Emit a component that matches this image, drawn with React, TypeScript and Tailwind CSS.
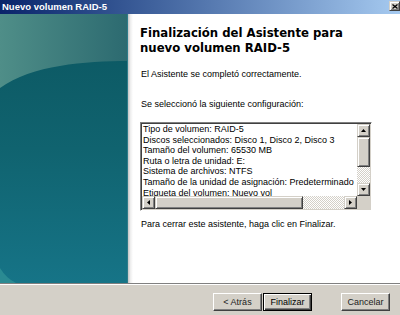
import React from "react";

const raised =
  "bg-[#d4d0c8] border border-t-[#d4d0c8] border-l-[#d4d0c8] border-r-[#404040] border-b-[#404040] shadow-[inset_1px_1px_#fff,inset_-1px_-1px_#808080]";
const checker =
  "bg-[repeating-conic-gradient(#d4d0c8_0_25%,#ffffff_0_50%)] bg-[length:2px_2px]";

function Arrow({ dir }: { dir: "up" | "down" | "left" | "right" }) {
  const pts: Record<string, string> = {
    up: "2.5,0 5,3 0,3",
    down: "0,0 5,0 2.5,3",
    left: "0,2.5 3,0 3,5",
    right: "0,0 3,2.5 0,5",
  };
  const v = dir === "up" || dir === "down";
  return (
    <svg width={v ? 5 : 3} height={v ? 3 : 5} viewBox={v ? "0 0 5 3" : "0 0 3 5"}>
      <polygon points={pts[dir]} fill="#000" />
    </svg>
  );
}

function ScrollBtn({ dir }: { dir: "up" | "down" | "left" | "right" }) {
  return (
    <div className={`w-[13px] h-[13px] shrink-0 flex items-center justify-center ${raised}`}>
      <Arrow dir={dir} />
    </div>
  );
}

function Watermark() {
  return (
    <svg width="128" height="269" viewBox="0 0 128 269" className="block shrink-0">
      <defs>
        <linearGradient id="wm" x1="0" y1="0" x2="0" y2="1">
          <stop offset="0" stopColor="#0b5660" />
          <stop offset="0.5" stopColor="#10636f" />
          <stop offset="1" stopColor="#167487" />
        </linearGradient>
        <linearGradient id="wt" x1="0" y1="0" x2="1" y2="0">
          <stop offset="0" stopColor="#4f8e88" />
          <stop offset="1" stopColor="#2c6a70" />
        </linearGradient>
      </defs>
      <rect width="128" height="269" fill="url(#wm)" />
      <path d="M0 0H128V47C85 47 32 51 0 74Z" fill="url(#wt)" />
      <path d="M0 254Q6 264 16 269H0Z" fill="#2a8a92" />
      <rect x="127" y="0" width="1" height="269" fill="#2d7c8a" />
    </svg>
  );
}

const lines = [
  "Tipo de volumen: RAID-5",
  "Discos seleccionados: Disco 1, Disco 2, Disco 3",
  "Tamaño del volumen: 65530 MB",
  "Ruta o letra de unidad: E:",
  "Sistema de archivos: NTFS",
  "Tamaño de la unidad de asignación: Predeterminado",
  "Etiqueta del volumen: Nuevo vol",
];

export default function App() {
  return (
    <div className="w-[400px] h-[315px] flex flex-col overflow-hidden bg-[#d4d0c8] font-['Liberation_Sans',Arial,sans-serif] text-black">
      {/* Title bar */}
      <div className="h-[14px] shrink-0 flex items-center justify-between bg-gradient-to-r from-[#0a246a] to-[#a6caf0]">
        <span className="pl-[2px] text-white font-bold text-[9.5px] leading-none">
          Nuevo volumen RAID-5
        </span>
        <div className={`w-[11px] h-[10px] flex items-center justify-center self-start mt-[1px] ${raised}`}>
          <svg width="6" height="5" viewBox="0 0 6 5">
            <path d="M0.5 0.5L5.5 4.5M5.5 0.5L0.5 4.5" stroke="#000" strokeWidth="1.3" />
          </svg>
        </div>
      </div>

      {/* Body */}
      <div className="h-[269px] shrink-0 flex">
        <Watermark />
        <div className="w-[5px] h-full shrink-0 bg-gradient-to-r from-[#c4c4c4] via-[#eeeeee] to-white" />
        <div className="flex-1 bg-white pl-[7px] pt-[12px] flex flex-col">
          <h1 className="font-['DejaVu_Sans',Verdana,sans-serif] font-bold text-[11.7px] leading-[15px]">
            Finalización del Asistente para
            <br />
            nuevo volumen RAID-5
          </h1>
          <p className="mt-[12.5px] pl-px text-[9px] leading-[11px]">
            El Asistente se completó correctamente.
          </p>
          <p className="mt-[19px] pl-px text-[9px] leading-[11px]">
            Se seleccionó la siguiente configuración:
          </p>

          {/* List box */}
          <div className="mt-[12.5px] w-[232px] h-[89px] border border-[#808080] border-r-white border-b-white shadow-[inset_1px_1px_#404040,inset_-1px_-1px_#d4d0c8] p-px flex flex-col">
            <div className="h-[72px] flex">
              <div className="flex-1 overflow-hidden bg-white pl-px text-[9px] leading-[10.6px] whitespace-nowrap">
                {lines.map((l) => (
                  <div key={l}>{l}</div>
                ))}
              </div>
              <div className="w-[13px] flex flex-col">
                <ScrollBtn dir="up" />
                <div className={`h-[30px] ${raised}`} />
                <div className={`flex-1 ${checker}`} />
                <ScrollBtn dir="down" />
              </div>
            </div>
            <div className="h-[13px] flex">
              <ScrollBtn dir="left" />
              <div className={`w-[148px] ${raised}`} />
              <div className={`flex-1 ${checker}`} />
              <ScrollBtn dir="right" />
              <div className="w-[13px] bg-[#d4d0c8]" />
            </div>
          </div>

          <p className="mt-[8px] pl-px text-[9px] leading-[11px]">
            Para cerrar este asistente, haga clic en Finalizar.
          </p>
        </div>
      </div>

      {/* Separator */}
      <div className="h-px shrink-0 bg-[#808080]" />
      <div className="h-px shrink-0 bg-white" />

      {/* Buttons */}
      <div className="flex-1 flex justify-end items-start pt-[8px] pr-[10px]">
        <button className="w-[49px] h-[18px] text-[9px] leading-none text-[#222] bg-[#d4d0c8] border border-t-white border-l-white border-r-[#404040] border-b-[#404040] shadow-[inset_-1px_-1px_#808080]">
          &lt; Atrás
        </button>
        <button className="ml-[1px] w-[49px] h-[18px] text-[9px] leading-none text-black bg-[#d4d0c8] border border-black shadow-[inset_1px_1px_#fff,inset_-1px_-1px_#404040,inset_-2px_-2px_#808080]">
          Finalizar
        </button>
        <button className="ml-[29px] w-[49px] h-[18px] text-[9px] leading-none text-[#222] bg-[#d4d0c8] border border-t-white border-l-white border-r-[#404040] border-b-[#404040] shadow-[inset_-1px_-1px_#808080]">
          Cancelar
        </button>
      </div>
    </div>
  );
}
